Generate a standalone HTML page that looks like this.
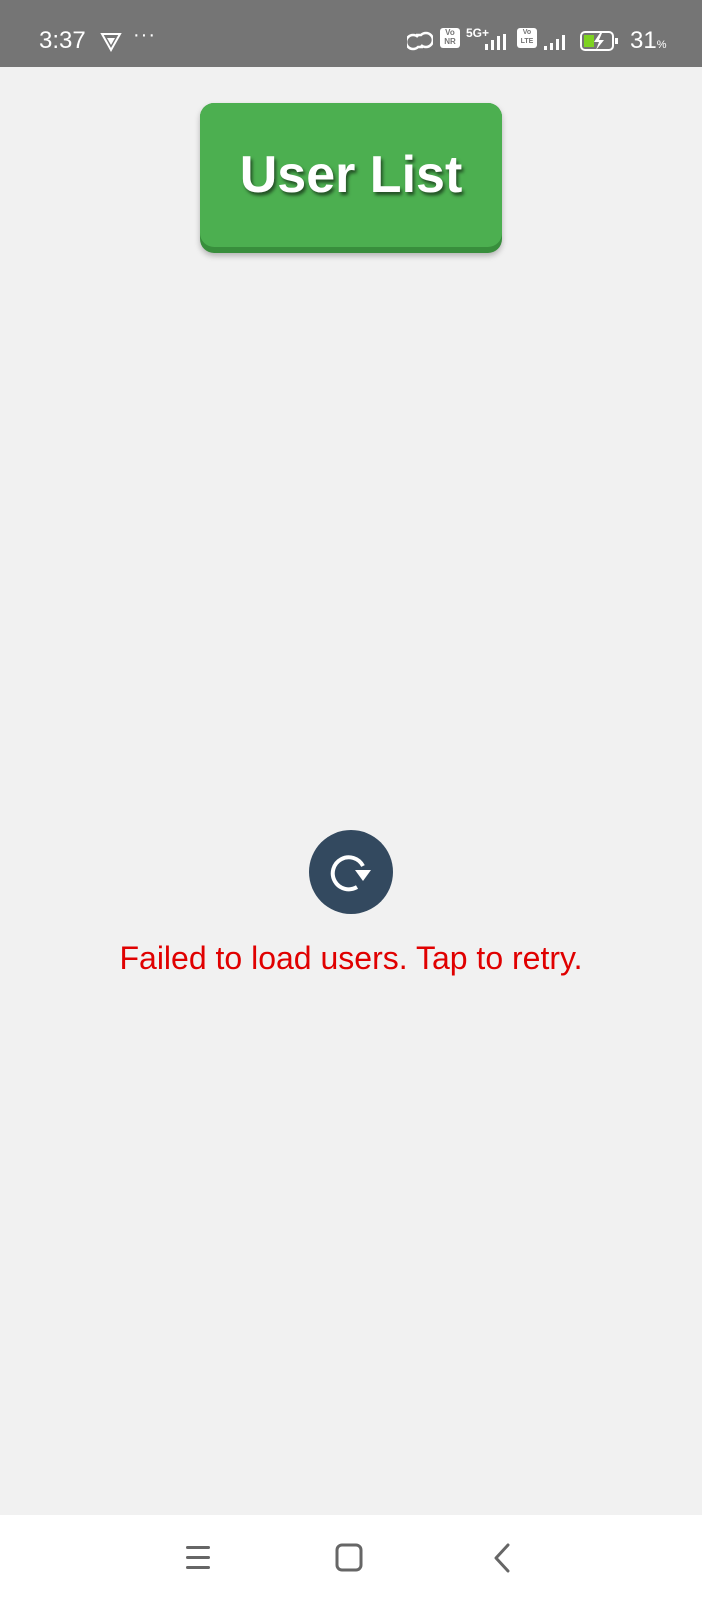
<!DOCTYPE html>
<html><head><style>
body{margin:0;width:702px;height:1600px;background:#f1f1f1;position:relative;font-family:"Liberation Sans",sans-serif;overflow:hidden}
.sb{position:absolute;top:0;left:0;width:702px;height:67px;background:#757575;color:#fff}
.btn{position:absolute;left:200px;top:103px;width:302px;height:150px;border-radius:14px;background:#388e3c;box-shadow:0 3px 6px rgba(0,0,0,.25)}
.btn .top{position:absolute;left:0;top:0;width:302px;height:144px;border-radius:14px;background:#4caf50;text-align:center;line-height:144px;color:#fff;font-weight:bold;font-size:52px;text-shadow:2px 3px 3px rgba(0,0,0,.55)}
.nav{position:absolute;left:0;top:1515px;width:702px;height:85px;background:#fff}
</style></head><body>
<div class="sb">
<span style="position:absolute;left:39px;top:27px;font-size:24px">3:37</span>
<svg style="position:absolute;left:100px;top:32px" width="22" height="20" viewBox="0 0 22 20"><path d="M2 2h18L11 18z" fill="none" stroke="#fff" stroke-width="2"/><path d="M7 6h8l-4 7z" fill="#fff"/></svg>
<span style="position:absolute;left:133px;top:24px;font-size:20px;letter-spacing:1px">···</span>
<svg style="position:absolute;left:407px;top:31px" width="26" height="20" viewBox="0 0 26 20"><path d="M11 6a7 7 0 1 0 0 10h5" fill="none" stroke="#fff" stroke-width="2.5"/><path d="M14 14a7 7 0 1 0 0-10h-5" fill="none" stroke="#fff" stroke-width="2.5"/></svg>
<span style="position:absolute;left:440px;top:28px;width:20px;height:20px;background:#fff;border-radius:3px;color:#757575;font-size:8px;line-height:9px;text-align:center;font-weight:bold">Vo<br>NR</span>
<span style="position:absolute;left:466px;top:26px;font-size:12px;font-weight:bold">5G+</span>
<svg style="position:absolute;left:475px;top:34px" width="36" height="16"><rect x="10" y="10" width="3" height="6" fill="#fff"/><rect x="16" y="6" width="3" height="10" fill="#fff"/><rect x="22" y="2" width="3" height="14" fill="#fff"/><rect x="28" y="0" width="3" height="16" fill="#fff"/></svg>
<span style="position:absolute;left:517px;top:28px;width:20px;height:20px;background:#fff;border-radius:3px;color:#757575;font-size:7px;line-height:9px;text-align:center;font-weight:bold">Vo<br>LTE</span>
<svg style="position:absolute;left:542px;top:34px" width="30" height="16"><rect x="2" y="12" width="3" height="4" fill="#fff"/><rect x="8" y="9" width="3" height="7" fill="#fff"/><rect x="14" y="5" width="3" height="11" fill="#fff"/><rect x="20" y="1" width="3" height="15" fill="#fff"/></svg>
<svg style="position:absolute;left:580px;top:30px" width="40" height="22"><rect x="1" y="2" width="32" height="18" rx="4" fill="none" stroke="#fff" stroke-width="2"/><rect x="4" y="5" width="10" height="12" fill="#7ed321"/><rect x="35" y="8" width="3" height="6" fill="#fff"/><path d="M20 3l-6 9h5l-3 8 8-10h-5l3-7z" fill="#fff"/></svg>
<span style="position:absolute;left:630px;top:27px;font-size:24px">31<span style="font-size:11px">%</span></span>
</div>
<div class="btn"><div class="top">User List</div></div>
<svg style="position:absolute;left:309px;top:830px" width="84" height="84" viewBox="0 0 84 84"><circle cx="42" cy="42" r="42" fill="#33495f"/><path d="M54 36 A16 16 0 1 0 48 57" fill="none" stroke="#fff" stroke-width="4"/><path d="M46 40h16l-8 11z" fill="#fff"/></svg>
<div style="position:absolute;left:0;width:702px;top:940px;text-align:center;color:#e00000;font-size:32px">Failed to load users. Tap to retry.</div>
<div class="nav">
<svg style="position:absolute;left:184px;top:28px" width="28" height="30"><rect x="2" y="3" width="24" height="3" rx="1.5" fill="#666"/><rect x="2" y="13" width="24" height="3" rx="1.5" fill="#666"/><rect x="2" y="23" width="24" height="3" rx="1.5" fill="#666"/></svg>
<svg style="position:absolute;left:335px;top:28px" width="30" height="30"><rect x="2" y="2" width="24" height="25" rx="5" fill="none" stroke="#666" stroke-width="3"/></svg>
<svg style="position:absolute;left:490px;top:28px" width="24" height="30"><path d="M18 2L6 15l12 13" fill="none" stroke="#666" stroke-width="3" stroke-linecap="round" stroke-linejoin="round"/></svg>
</div>
</body></html>
